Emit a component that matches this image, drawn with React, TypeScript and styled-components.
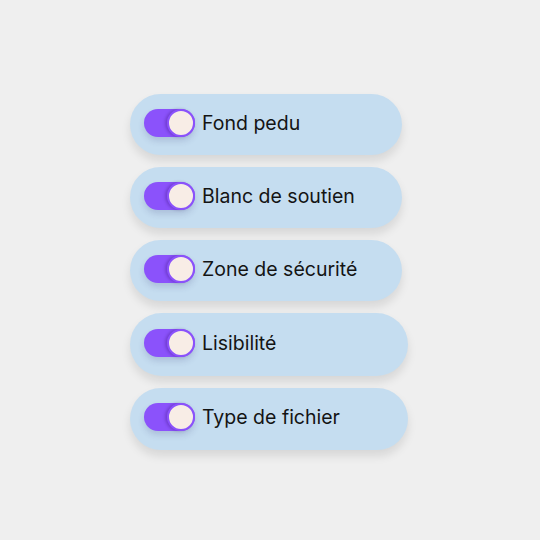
import styled, { createGlobalStyle } from 'styled-components';

const GlobalStyle = createGlobalStyle`
  html, body {
    margin: 0;
    padding: 0;
    background: #efefef;
  }
  body {
    font-family: Inter, "Noto Sans", sans-serif;
  }
`;

const Page = styled.div`
  width: 540px;
  height: 540px;
  box-sizing: border-box;
  padding: 94px 0 0 130px;
  display: flex;
  flex-direction: column;
  gap: 12px;
`;

const Pill = styled.div<{ $width: number; $height: number }>`
  width: ${({ $width }) => $width}px;
  height: ${({ $height }) => $height}px;
  box-sizing: border-box;
  padding: 0 14px;
  display: flex;
  align-items: center;
  gap: 7px;
  background: #c5ddf0;
  border-radius: 32px;
  box-shadow: 0 6px 10px rgba(0, 0, 0, 0.1);
`;

const Track = styled.div`
  position: relative;
  width: 51px;
  height: 28px;
  margin-top: -3px;
  border-radius: 14px;
  background: #8b52fb;
  box-shadow: 0 4px 6px rgba(60, 60, 120, 0.18);
  flex-shrink: 0;
`;

const Knob = styled.div`
  position: absolute;
  right: 0;
  top: 0;
  width: 24px;
  height: 24px;
  border-radius: 50%;
  background: #f8ede6;
  border: 2px solid #8b52fb;
  box-shadow: -2px 0 3px rgba(40, 0, 90, 0.25);
`;

const Label = styled.span`
  font-size: 19.5px;
  color: #141414;
  margin-top: -3px;
`;

const items = [
  { label: 'Fond pedu', width: 272, height: 61 },
  { label: 'Blanc de soutien', width: 272, height: 61 },
  { label: 'Zone de sécurité', width: 272, height: 61 },
  { label: 'Lisibilité', width: 278, height: 62.5 },
  { label: 'Type de fichier', width: 278, height: 62 },
];

export default function App() {
  return (
    <>
      <GlobalStyle />
      <Page>
        {items.map((item) => (
          <Pill key={item.label} $width={item.width} $height={item.height}>
            <Track>
              <Knob />
            </Track>
            <Label>{item.label}</Label>
          </Pill>
        ))}
      </Page>
    </>
  );
}
